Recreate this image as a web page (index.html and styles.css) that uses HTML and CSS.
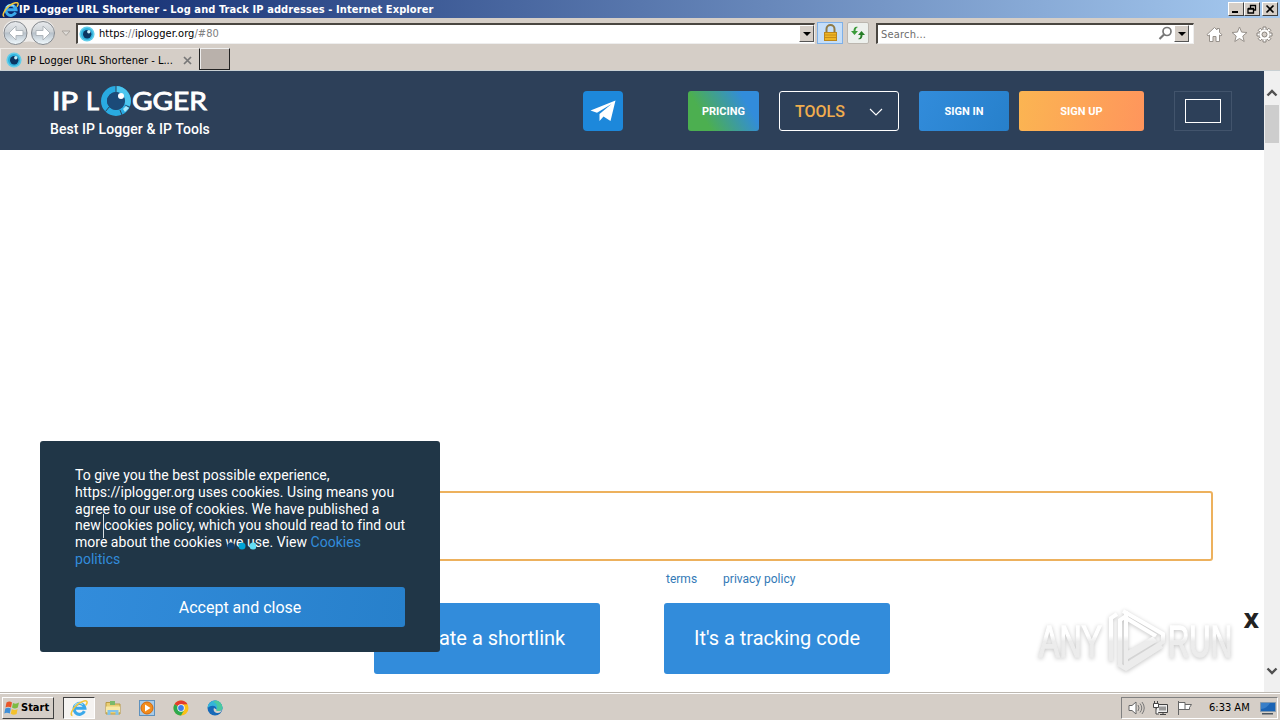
FILE: index.html
```html
<!DOCTYPE html>
<html lang="en">
<head>
    <meta charset="UTF-8">
    <meta name="viewport" content="width=device-width, initial-scale=1.0">
    <title>IP Logger URL Shortener - Log and Track IP addresses</title>
    <link rel="stylesheet" href="styles.css">
</head>
<body>
    <svg width="0" height="0" class="defs">
        <defs>
            <symbol id="ie" viewBox="0 0 16 16">
                <path d="M12.800 10.800A4.800 4.800 0 1 1 13.200 8.200H4.500" fill="none" stroke="#3ba9ea" stroke-width="2.800"/>
                <path d="M11.500 5A4.800 4.800 0 0 0 4 6" fill="none" stroke="#a5e0fa" stroke-width="1"/>
                <path d="M2.200 14.600C-.6 14.400 2.200 8.200 7 4.500c4-3 8-3.800 8.200-1.800.1 1-.5 2-1.200 2.800" fill="none" stroke="#f3c63b" stroke-width="1.400"/>
            </symbol>
            <symbol id="eye" viewBox="0 0 16 16">
                <circle cx="8" cy="8" r="7.600" fill="#62cdea"/>
                <circle cx="8" cy="8" r="6" fill="#2fb0dc"/>
                <circle cx="8.200" cy="8.200" r="4.200" fill="#0b3562"/>
                <circle cx="9.800" cy="5.800" r="1.700" fill="#c5effa"/>
            </symbol>
            <symbol id="caret" viewBox="0 0 8 4">
                <path d="M0 0h8L4 4z"/>
            </symbol>
        </defs>
    </svg>

    <div class="titlebar">
        <svg class="title-icon" width="17" height="17"><use href="#ie"/></svg>
        <span class="title-text">IP Logger URL Shortener - Log and Track IP addresses - Internet Explorer</span>
        <div class="win-buttons">
            <div class="win-btn"><svg width="12" height="10"><path d="M2 7h6v2H2z"/></svg></div>
            <div class="win-btn"><svg width="12" height="10"><path d="M4.500 4V1.500h5v4.500H8M4 1.500h6M2 5h5.500v4H2zM2 4.500h6" fill="none" stroke="#000" stroke-width="1.300"/></svg></div>
            <div class="win-btn win-close"><svg width="12" height="10"><path d="M2.500 1.500l7 7m0-7l-7 7" stroke="#000" stroke-width="1.700"/></svg></div>
        </div>
    </div>

    <div class="navbar">
        <svg class="nav-arrows" width="72" height="28" viewBox="0 0 72 28">
            <defs>
                <linearGradient id="glass" x1="0" y1="0" x2="0" y2="1">
                    <stop offset="0" stop-color="#e8ebee"/>
                    <stop offset=".45" stop-color="#cdd2d6"/>
                    <stop offset=".5" stop-color="#b6c0c9"/>
                    <stop offset="1" stop-color="#f2fbff"/>
                </linearGradient>
            </defs>
            <path d="M15 2h28a12 12 0 0 1 0 24q-14-5-28 0a12 12 0 0 1 0-24z" fill="#eeecea"/>
            <circle cx="15.500" cy="15" r="11.500" fill="url(#glass)" stroke="#85898e"/>
            <circle cx="43" cy="15" r="11.500" fill="url(#glass)" stroke="#85898e"/>
            <path d="M16 8l-7 7 7 7v-4.500h7v-5h-7z" fill="#fff" stroke="#aeb5bb"/>
            <path d="M43 8l7 7-7 7v-4.500h-7v-5h7z" fill="#fff" stroke="#aeb5bb"/>
            <path d="M62 13h8l-4 4.500z" fill="#dedbd7" stroke="#aaa59f"/>
        </svg>
        <div class="address">
            <svg class="favicon" width="16" height="16"><use href="#eye"/></svg>
            <span class="url"><i>https</i>://<i>iplogger.org</i>/#80</span>
            <div class="drop"><svg width="8" height="4"><use href="#caret"/></svg></div>
        </div>
        <div class="lock">
            <svg width="15" height="18" viewBox="0 0 15 18">
                <path d="M3.500 9V5a4 4 0 0 1 8 0v4" fill="none" stroke="#8f7a45" stroke-width="2"/>
                <rect x="1.500" y="8.500" width="12" height="8" fill="#eeb524" stroke="#bb861c"/>
                <path d="M2 11h11M2 13.500h11" stroke="#c88e18"/>
            </svg>
        </div>
        <div class="refresh">
            <svg width="16" height="14" viewBox="0 0 16 14">
                <path d="M8 1C5 0 3.500 2 3.500 5H1l3.500 4L8 5H5.500C5.500 3 6 2 8 1z" fill="#3a9a38"/>
                <path d="M8 13c3 1 4.500-1 4.500-4H15l-3.500-4L8 9h2.500c0 2-.5 3-2.500 4z" fill="#267d27"/>
            </svg>
        </div>
        <div class="search">
            <span>Search...</span>
            <svg width="15" height="15" viewBox="0 0 15 15"><circle cx="9" cy="5.500" r="4" fill="none" stroke="#777" stroke-width="1.700"/><path d="M6 8.500L1.500 13" stroke="#777" stroke-width="2.200"/></svg>
            <div class="drop"><svg width="8" height="4"><use href="#caret"/></svg></div>
        </div>
        <div class="tools">
            <svg width="17" height="17" viewBox="0 0 17 17"><path d="M1 8.500L8.500 1.500 11 4V2.500h2.500v4L16 8.700l-1 1.300-1.500-1V15.500h-3.500v-5H7v5H3.500V9L2 10z" fill="#fff" stroke="#97918b"/></svg>
            <svg width="17" height="17" viewBox="0 0 17 17"><path d="M8.500 1l2.100 5.100 5.400.4-4.200 3.500 1.400 5.500-4.700-3-4.700 3 1.400-5.500L1 6.500l5.400-.4z" fill="#fff" stroke="#97918b"/></svg>
            <svg width="17" height="17" viewBox="0 0 17 17">
                <g fill="#fff" stroke="#88827c">
                    <path d="M7 1h3v3H7zM7 13h3v3H7zM1 7h3v3H1zM13 7h3v3h-3zM2.200 4.300l2.100-2.100 2 2-2.100 2.100zM12.800 2.200l2.100 2.100-2 2-2.100-2zM2.200 12.700l2.100 2.100 2-2-2.100-2.100zM12.800 14.800l2.100-2.100-2-2-2.100 2z"/>
                    <circle cx="8.500" cy="8.500" r="5"/>
                </g>
                <circle cx="8.500" cy="8.500" r="5.200" fill="#fff"/>
                <circle cx="8.500" cy="8.500" r="2.500" fill="#d4cec8" stroke="#88827c"/>
            </svg>
        </div>
    </div>

    <div class="tabs">
        <div class="tab">
            <svg width="16" height="16"><use href="#eye"/></svg>
            <span class="tab-text">IP Logger URL Shortener - L...</span>
            <svg width="9" height="9" viewBox="0 0 9 9"><path d="M1 1l7 7m0-7L1 8" stroke="#777" stroke-width="1.700"/></svg>
        </div>
        <div class="new-tab"></div>
    </div>

    <div class="viewport">
        <div class="page">
            <header class="header">
                <a class="brand">
                    <svg width="158" height="34" viewBox="0 0 158 34">
                        <g class="logo-text">
                            <text x="0" y="26" textLength="26" lengthAdjust="spacingAndGlyphs">IP</text>
                            <text x="34" y="26" textLength="13" lengthAdjust="spacingAndGlyphs">L</text>
                            <text x="80" y="26" textLength="75" lengthAdjust="spacingAndGlyphs">GGER</text>
                        </g>
                        <circle cx="64" cy="17" r="12" fill="none" stroke="#29abe2" stroke-width="6"/>
                        <path d="M64 5a12 12 0 0 1 11 16" fill="none" stroke="#4bc5ee" stroke-width="6"/>
                        <path d="M64 2v6M53.500 27.500l4-5M73.500 21.500l5 2M68 26l2 5" stroke="#2d4059"/>
                        <circle cx="64" cy="17" r="9" fill="#1b4a78"/>
                        <circle cx="69" cy="12" r="3" fill="#fff"/>
                        <path d="M74 22l3 2-4 4-2-3z" fill="#a5e8fb"/>
                    </svg>
                    <span class="slogan">Best IP Logger &amp; IP Tools</span>
                </a>
                <a class="telegram">
                    <svg width="26" height="22" viewBox="0 0 26 22"><path d="M25.500.5L.5 10.500l6.500 2.300L21.500 4 9.500 14v7l4-4.500 7 4.500z" fill="#fff"/></svg>
                </a>
                <a class="btn btn-pricing">PRICING</a>
                <div class="btn-tools">
                    <span>TOOLS</span>
                    <svg width="14" height="8" viewBox="0 0 14 8"><path d="M1 1l6 6 6-6" fill="none" stroke="#fff" stroke-width="1.100"/></svg>
                </div>
                <a class="btn btn-signin">SIGN IN</a>
                <a class="btn btn-signup">SIGN UP</a>
                <div class="lang"><div class="flag"></div></div>
            </header>

            <main class="main">
                <div class="link-input"></div>
                <div class="links">
                    <a>terms</a>
                    <a>privacy policy</a>
                </div>
                <div class="actions">
                    <a class="action">Create a shortlink</a>
                    <a class="action">It's a tracking code</a>
                </div>
            </main>

            <div class="cookies">
                <p>To give you the best possible experience, https://iplogger.org uses cookies. Using means you agree to our use of cookies. We have published a new cookies policy, which you should read to find out more about the cookies we use. View <a>Cookies politics</a></p>
                <a class="accept">Accept and close</a>
                <svg class="loader" width="30" height="8" viewBox="0 0 30 8"><circle cx="5" cy="4" r="3.500" fill="#123c68"/><circle cx="16" cy="4" r="3.500" fill="#00a5d8"/><circle cx="27" cy="4" r="3.500" fill="#62dcf5"/></svg>
                <div class="cursor"></div>
            </div>

            <div class="close">X</div>
            <svg class="watermark" width="210" height="72" viewBox="0 0 210 72">
                <defs>
                    <linearGradient id="fade" gradientUnits="userSpaceOnUse" x1="0" y1="0" x2="0" y2="72">
                        <stop offset=".44" stop-color="#fff"/>
                        <stop offset=".52" stop-color="#ececec"/>
                    </linearGradient>
                </defs>
                <g class="mark-text">
                    <text x="9" y="53" textLength="63" lengthAdjust="spacingAndGlyphs">ANY</text>
                    <text x="138" y="53" textLength="64" lengthAdjust="spacingAndGlyphs">RUN</text>
                </g>
                <path class="mark-logo" d="M81 57V14l6-4M90 60V16l6-4v38l28-16M96 7v7l30 18M93 7l40 23v8L96 61v-7l30-18M88 60l8 5 36-23"/>
            </svg>
        </div>
        <div class="scrollbar">
            <svg width="12" height="8" viewBox="0 0 12 8"><path d="M1.500 6.500L6 2l4.500 4.500" fill="none" stroke="#505050" stroke-width="2.400"/></svg>
            <div class="thumb"></div>
            <svg class="down" width="12" height="8" viewBox="0 0 12 8"><path d="M1.500 1.500L6 6l4.500-4.500" fill="none" stroke="#505050" stroke-width="2.400"/></svg>
        </div>
    </div>

    <div class="taskbar">
        <div class="start">
            <svg width="16" height="16" viewBox="0 0 16 16">
                <path d="M2.500 2.500q3-2 5.500 0L7 7.500q-3-1.500-5.500 0z" fill="#e8562a"/>
                <path d="M9 3q3 1.500 6-.5l-1.200 5q-3 2-5.800 0z" fill="#7dbb42"/>
                <path d="M1.300 8.500q3-1.500 5.500 0l-1 5q-3-1.500-5.500 0z" fill="#3f8fd8"/>
                <path d="M7.800 9q3 1.800 5.800 0l-1 5q-3 1.500-5.800-.2z" fill="#f4c22d"/>
            </svg>
            <span>Start</span>
        </div>
        <div class="task-ie"><svg width="18" height="18"><use href="#ie"/></svg></div>
        <div class="quick">
            <svg width="16" height="16" viewBox="0 0 16 16"><path d="M1 2.500h5l1 1.500h8v10H1z" fill="#e9ce72" stroke="#b99a44"/><path d="M5 1h5v4H5z" fill="#79b86a"/><path d="M1 6.500h14V12H1z" fill="#f8e8a5"/><path d="M2.500 15V10h11v5h-3v-3h-5v3z" fill="#83c3e8"/></svg>
            <svg width="16" height="16" viewBox="0 0 16 16"><rect x=".5" y=".5" width="15" height="15" fill="#a8cbe8" stroke="#5e91bd"/><circle cx="8" cy="8" r="6" fill="#f28c1c" stroke="#d3690c"/><path d="M6 4.500L11.500 8 6 11.500z" fill="#fff"/></svg>
            <svg width="16" height="16" viewBox="0 0 16 16"><circle cx="8" cy="8" r="7.500" fill="#fbc116"/><path d="M8 8L1.500 4.250A7.500 7.500 0 0 1 14.500 4.250L8 4.500z" fill="#e33b2e"/><path d="M1.500 4.250A7.500 7.500 0 0 0 8 15.500l3.200-5.600L8 8z" fill="#2da94f"/><circle cx="8" cy="8" r="3.700" fill="#fff"/><circle cx="8" cy="8" r="2.900" fill="#3f7de8"/></svg>
            <svg width="16" height="16" viewBox="0 0 16 16"><circle cx="8" cy="8" r="7.500" fill="#1769b8"/><path d="M.5 8A7.500 7.500 0 0 1 15.500 8c0 2-2 3-4.500 3-1.500 0-2-.5-1.500-1.500C10 6 5 4 .5 8z" fill="#35b5d9"/><path d="M9 .6a7.500 7.500 0 0 1 6.500 7.400c0 2-2 3-4.500 3-1.500 0-2-.5-1.500-1.500C11 7 10 3 6 2z" fill="#4bc9a0"/><path d="M9.500 9.500c-.5 1 0 1.500 1.500 1.500 1.700 0 3-.3 3.800-1 .3 1-1.800 3.500-4.800 3C7 12.500 6 10 7 8z" fill="#d5d0c9"/></svg>
        </div>
        <div class="tray">
            <svg width="17" height="16" viewBox="0 0 17 16"><path d="M1 5.500h3L8 2v12l-4-3.500H1z" fill="#fff" stroke="#666"/><path d="M10 5q2 3 0 6M12 3.500q3.500 4.500 0 9M14 2q4.500 6 0 12" fill="none" stroke="#777"/></svg>
            <svg width="17" height="16" viewBox="0 0 17 16"><path d="M4.500 4.500h11v8h-11zM8 14.500h6M11 12v2" fill="#eee" stroke="#444"/><path d="M7 6.500h7v4H7z" fill="#999"/><path d="M1.500 3.500h5v4h-5zM2.500 1v2M5.500 1v2M4 8v6h3" fill="#fff" stroke="#444"/></svg>
            <svg width="17" height="16" viewBox="0 0 17 16"><path d="M2.500 1v14M3 2.500h6v7H3M9 4.500h6.500l-2 3 0 2H9" fill="#fff" stroke="#666"/></svg>
            <span class="clock">6:33 AM</span>
            <svg width="16" height="14" viewBox="0 0 16 14"><path d="M.5 1.500h15v9H.5z" fill="#1b64b5" stroke="#8299ae"/><path d="M1 8q6-.5 9-6H1z" fill="#397fc8"/><path d="M2 12h11v1.500H2z" fill="#4a555f"/></svg>
        </div>
    </div>
</body>
</html>
```
FILE: styles.css
```css
* {
    box-sizing: border-box;
}
body {
    margin: 0;
    width: 1280px;
    height: 720px;
    overflow: hidden;
    display: flex;
    flex-direction: column;
    background: #d5cec7;
    font-family: "DejaVu Sans Condensed", "DejaVu Sans", sans-serif;
    font-size: 11px;
    color: #000;
}
svg {
    display: block;
    flex-shrink: 0;
}
.defs {
    position: absolute;
}

/* browser window */
.titlebar {
    height: 18px;
    flex-shrink: 0;
    display: flex;
    align-items: center;
    padding: 0 2px;
    background: linear-gradient(90deg, #0a246a, #a6caf0);
    color: #fff;
}
.title-text {
    font-weight: bold;
    white-space: nowrap;
    letter-spacing: .09px;
}
.win-buttons {
    margin-left: auto;
    display: flex;
}
.win-btn {
    width: 16px;
    height: 14px;
    padding: 1px;
    background: #d5cec7;
    border: 1px solid;
    border-color: #fff #404040 #404040 #fff;
}
.win-close {
    margin-left: 2px;
}
.navbar {
    height: 29px;
    flex-shrink: 0;
    display: flex;
    align-items: center;
    padding-bottom: 1px;
}
.nav-arrows {
    margin-right: 4px;
}
.address,
.search {
    height: 21px;
    margin-top: 2px;
    display: flex;
    align-items: center;
    background: #fff;
    border: 1px solid;
    border-color: #4a4641 #eee #eee #4a4641;
    border-width: 2px 1px 1px 2px;
}
.address {
    width: 739px;
}
.favicon {
    margin: 0 4px 0 1px;
}
.url {
    color: #808080;
    letter-spacing: .05px;
}
.url i {
    color: #000;
    font-style: normal;
}
.drop {
    width: 15px;
    height: 17px;
    display: flex;
    align-items: center;
    justify-content: center;
    background: #d5cec7;
    border: 1px solid;
    border-color: #fff #555 #555 #fff;
}
.address .drop {
    margin-left: auto;
}
.lock {
    width: 26px;
    height: 22px;
    margin: 2px 0 0 2px;
    display: flex;
    justify-content: center;
    align-items: center;
    background: #c5def8;
    border: 1px solid #7eb0e8;
}
.refresh {
    width: 22px;
    height: 22px;
    margin: 2px 0 0 4px;
    display: flex;
    justify-content: center;
    align-items: center;
    background: #edf0ed;
    border: 1px solid #bcb7b0;
    border-radius: 2px;
}
.search {
    width: 318px;
    margin-left: 7px;
    padding: 0 4px 0 3px;
    color: #6d6d6d;
}
.search span {
    flex: 1;
    padding-top: 1px;
    letter-spacing: .2px;
}
.search .drop {
    margin-left: 1px;
}
.tools {
    display: flex;
    gap: 8px;
    margin: 5px 0 0 12px;
}
.tabs {
    height: 24px;
    flex-shrink: 0;
    display: flex;
    align-items: flex-end;
    border-bottom: 1px solid #c9d0d3;
}
.tab {
    width: 199px;
    height: 22px;
    display: flex;
    align-items: center;
    padding: 1px 0 0 5px;
    border: 1px solid #eeeae6;
    border-bottom: 0;
    border-right: 0;
}
.tab-text {
    width: 161px;
    padding-left: 5px;
    white-space: nowrap;
}
.new-tab {
    width: 31px;
    height: 22px;
    background: #b9b1ab;
    border: 1px solid #222;
    border-top-color: #eee;
    box-shadow: inset 1px 0 #eee;
}

/* web page */
.viewport {
    flex: 1;
    display: flex;
    min-height: 0;
}
.page {
    position: relative;
    width: 1264px;
    background: #fff;
    font-family: Roboto, sans-serif;
}
.header {
    height: 79px;
    display: flex;
    align-items: center;
    padding-left: 50px;
    background: #2d4059;
    color: #fff;
}
.brand {
    width: 533px;
}
.brand svg {
    margin: 0 0 0 2px;
}
.logo-text {
    font: 25px Lato, sans-serif;
    fill: #fff;
    stroke: #fff;
    stroke-width: .9;
}
.slogan {
    display: block;
    margin-top: 2px;
    font-size: 14px;
    font-weight: 500;
    line-height: 18px;
    letter-spacing: .07px;
}
.telegram {
    width: 40px;
    height: 40px;
    margin-right: 65px;
    display: flex;
    align-items: center;
    justify-content: center;
    background: #1d88db;
    border-radius: 4px;
}
.btn {
    height: 40px;
    border-radius: 3px;
    font-size: 11px;
    font-weight: bold;
    line-height: 41px;
    text-align: center;
}
.btn-pricing {
    width: 71px;
    background: linear-gradient(60deg, #4caf50 25%, #328cdb 80%);
}
.btn-tools {
    width: 120px;
    height: 40px;
    margin: 0 20px;
    padding: 2px 15px 0;
    display: flex;
    align-items: center;
    justify-content: space-between;
    border: 1px solid #fff;
    border-radius: 3px;
    color: #f0ad4e;
    font-size: 16px;
    font-weight: 500;
}
.btn-signin {
    width: 90px;
    margin-right: 10px;
    background: linear-gradient(120deg, #328cdb, #2780cb);
}
.btn-signup {
    width: 125px;
    background: linear-gradient(100deg, #fbb552, #ff955c);
}
.lang {
    width: 58px;
    height: 40px;
    margin-left: 30px;
    padding: 7px 10px;
    border: 1px solid #42546c;
}
.flag {
    width: 36px;
    height: 24px;
    border: 1px solid #fff;
}
.main {
    padding: 341px 51px 0;
}
.link-input {
    height: 70px;
    border: 2px solid #edb15d;
    border-radius: 3px;
}
.links {
    display: flex;
    gap: 26px;
    padding: 9px 0 0 615px;
    color: #337ab7;
    font-size: 12px;
    line-height: 18px;
}
.actions {
    display: flex;
    justify-content: center;
    gap: 64px;
    margin-top: 15px;
}
.action {
    width: 226px;
    height: 71px;
    background: #328cdb;
    border-radius: 3px;
    color: #fff;
    font-size: 20px;
    line-height: 70px;
    text-align: center;
}
.cookies {
    position: absolute;
    left: 40px;
    bottom: 40px;
    width: 400px;
    height: 211px;
    padding: 26px 35px 0;
    background: #203647;
    border-radius: 3px;
    color: #fff;
}
.cookies p {
    margin: 0 -2px 19px 0;
    font-size: 14px;
    line-height: 16.800px;
    letter-spacing: .02px;
}
.cookies p a {
    color: #328cdb;
}
.accept {
    display: block;
    height: 40px;
    background: linear-gradient(100deg, #328cdb, #2780cb);
    border-radius: 3px;
    font-size: 16px;
    line-height: 41px;
    text-align: center;
}
.loader {
    position: absolute;
    left: 186px;
    top: 101px;
}
.cursor {
    position: absolute;
    left: 63px;
    top: 73px;
    width: 1px;
    height: 24px;
    background: #dbe0e3;
}
.close {
    position: absolute;
    right: 5px;
    bottom: 61px;
    color: #222;
    font: 800 21px/22px "Open Sans", sans-serif;
}
.watermark {
    position: absolute;
    left: 1030px;
    bottom: 16px;
    filter: drop-shadow(0 1px 2px #c4c4c4);
}
.mark-text {
    font: 44px "Liberation Sans", sans-serif;
    fill: url(#fade);
    stroke: url(#fade);
    stroke-width: 1.5;
}
.mark-logo {
    fill: none;
    stroke: url(#fade);
    stroke-width: 4;
}
.scrollbar {
    width: 16px;
    display: flex;
    flex-direction: column;
    align-items: center;
    padding: 18px 0 17px;
    background: #f0f0f0;
}
.thumb {
    width: 14px;
    height: 38px;
    margin-top: 8px;
    background: #cdcdcd;
}
.down {
    margin-top: auto;
}

/* taskbar */
.taskbar {
    height: 28px;
    flex-shrink: 0;
    display: flex;
    align-items: center;
    padding: 3px 2px 1px;
    border-top: 1px solid #bdb8b1;
    box-shadow: inset 0 1px #fff;
}
.start {
    width: 52px;
    height: 22px;
    display: flex;
    align-items: center;
    gap: 1px;
    padding-left: 1px;
    border: 1px solid;
    border-color: #fff #404040 #404040 #fff;
    font-weight: bold;
}
.task-ie {
    width: 32px;
    height: 22px;
    margin-left: 9px;
    display: flex;
    align-items: center;
    justify-content: center;
    background: #f5f3f1;
    border: 1px solid;
    border-color: #404040 #fff #fff #404040;
}
.quick {
    display: flex;
    gap: 18px;
    margin-left: 10px;
}
.tray {
    width: 157px;
    height: 22px;
    margin-left: auto;
    display: flex;
    align-items: center;
    gap: 7px;
    padding-left: 6px;
    border: 1px solid;
    border-color: #808080 #fff #fff #808080;
}
.clock {
    width: 44px;
    margin: 0 0 0 9px;
    white-space: nowrap;
}
```
